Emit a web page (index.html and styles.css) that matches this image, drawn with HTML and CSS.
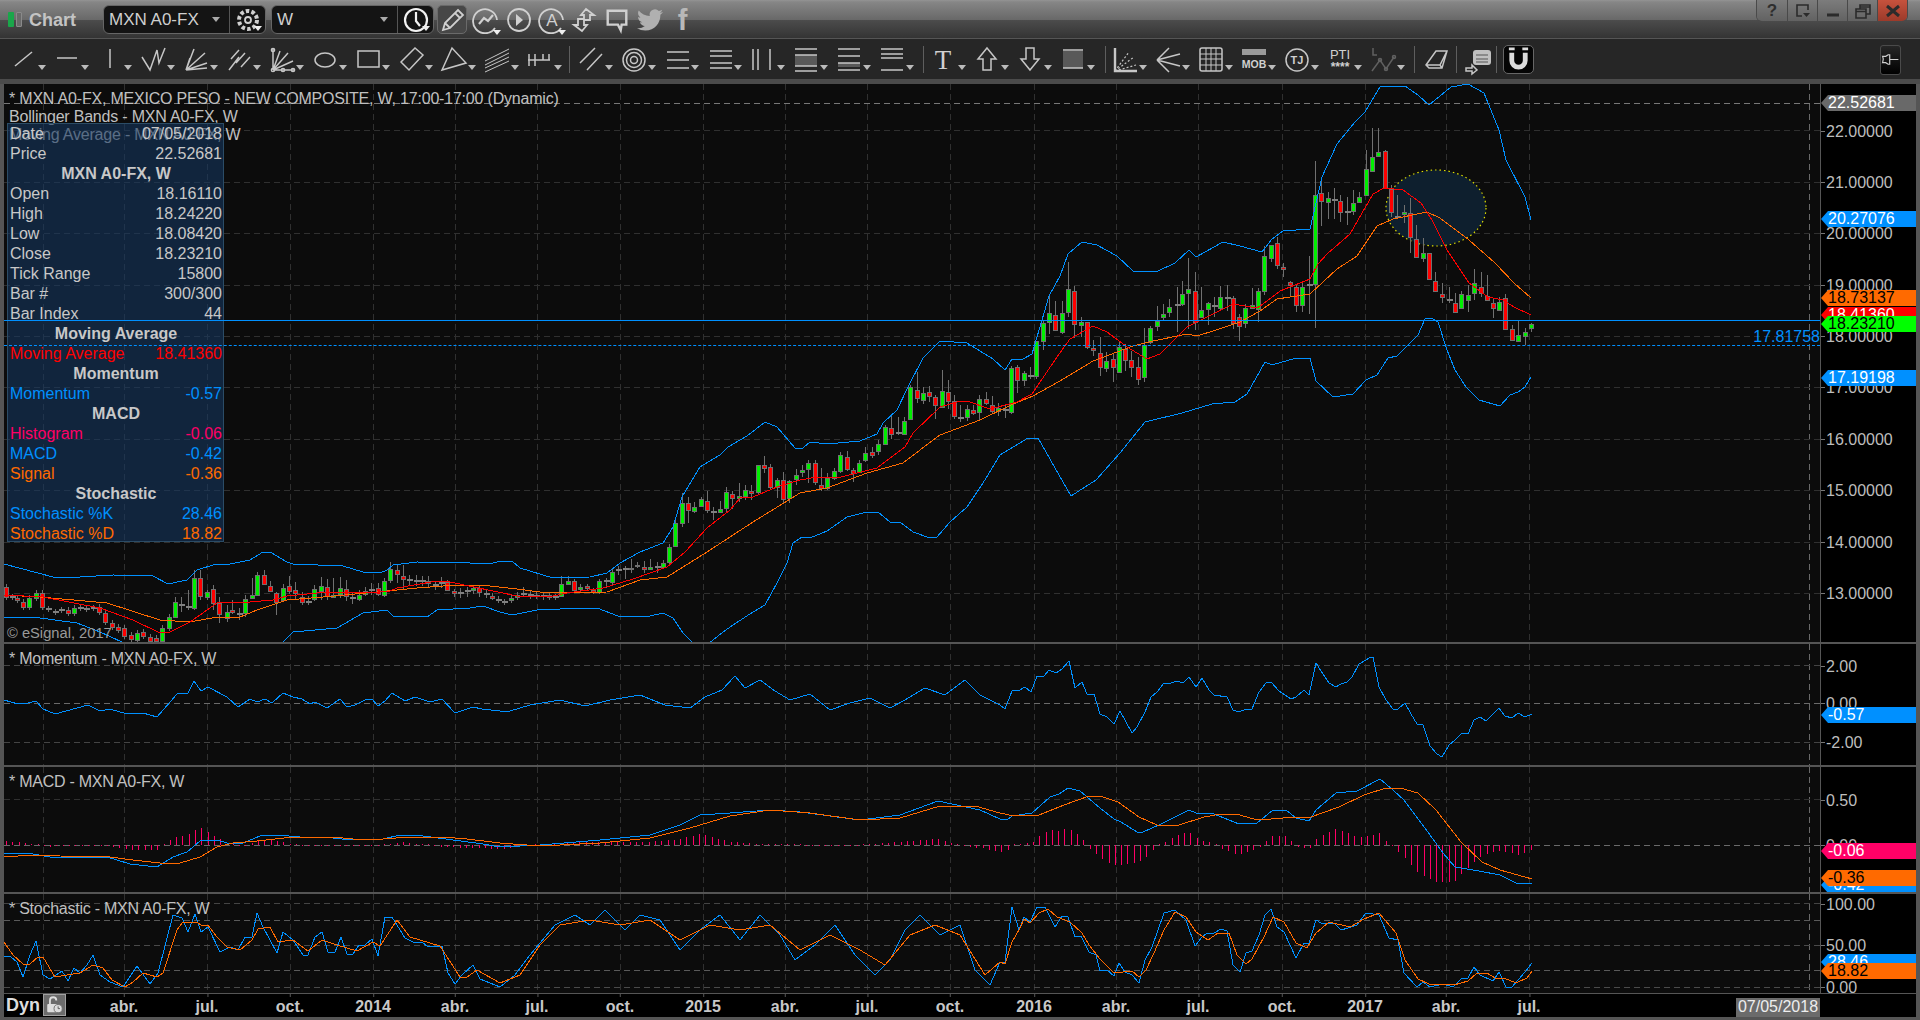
FILE: index.html
```html
<!DOCTYPE html>
<html lang="es">
<head>
<meta charset="utf-8">
<title>Chart - MXN A0-FX</title>
<link rel="stylesheet" href="styles.css">
</head>
<body>
<div class="window">
  <header class="titlebar">
    <div class="mark"><i class="mark-on"></i><i class="mark-off"></i></div>
    <div class="app-title">Chart</div>
    <div class="combo">
      <div class="combo-field"><span>MXN A0-FX</span><i class="caret caret-light"></i></div>
      <div class="combo-btn">
        <svg class="tic" viewBox="0 0 28 28"><circle class="gear" cx="14" cy="14" r="9"/><circle cx="14" cy="14" r="3"/></svg><i class="caret caret-mini"></i>
      </div>
    </div>
    <div class="combo">
      <div class="combo-field"><span>W</span><i class="caret caret-light"></i></div>
      <div class="combo-btn">
        <svg class="tic tic-bright" viewBox="0 0 28 28"><circle cx="14" cy="14" r="11"/><path d="M14 6V15L18 20"/></svg><i class="caret caret-mini"></i>
      </div>
    </div>
    <div class="pencil-btn">
      <svg class="tic" viewBox="0 0 28 28"><path d="M5 24L7 17 20 4 25 9 12 22ZM7 17L12 22M17 7L22 12"/></svg>
    </div>
    <div class="ticon"><svg class="tic" viewBox="0 0 28 28"><path d="M23 22A12 12 0 1 1 25 14"/><path class="thick" d="M7 18L12 12 16 15 21 9"/></svg><i class="caret caret-mini"></i></div>
    <div class="ticon"><svg class="tic" viewBox="0 0 28 28"><circle cx="14" cy="14" r="11"/><path class="fill" d="M11 8L18 14 11 20Z"/></svg></div>
    <div class="ticon"><svg class="tic" viewBox="0 0 28 28"><path d="M23 22A12 12 0 1 1 25 14"/><text class="ic-text ic-a" x="14" y="20">A</text></svg><i class="caret caret-mini"></i></div>
    <div class="ticon"><svg class="tic" viewBox="0 0 28 28"><path d="M16 3L24 9 20 9 20 14 14 14 14 9 11 9ZM12 25L4 19 8 19 8 13 14 13 14 19 17 19Z"/></svg></div>
    <div class="ticon"><svg class="tic tic-thick" viewBox="0 0 28 28"><path d="M4 4H24V19H19L18 25 15 19H4Z"/></svg></div>
    <div class="ticon"><svg class="tic tic-soft" viewBox="0 0 24 24"><path d="M23.95 4.57a10 10 0 01-2.82.77 4.96 4.96 0 002.16-2.72c-.95.55-2 .95-3.12 1.18a4.92 4.92 0 00-8.38 4.48C7.69 8.09 4.07 6.13 1.64 3.16a4.82 4.82 0 00-.66 2.47c0 1.71.87 3.21 2.19 4.1a4.9 4.9 0 01-2.23-.61v.06c0 2.38 1.7 4.37 3.95 4.82-.41.11-.85.17-1.3.17-.31 0-.62-.03-.92-.08.63 1.95 2.44 3.37 4.6 3.41A9.87 9.87 0 010 19.54a14 14 0 007.56 2.21c9.05 0 14-7.5 14-13.98 0-.21 0-.42-.02-.63a9.94 9.94 0 002.46-2.55z"/></svg></div>
    <div class="ticon fb">f</div>
    <div class="winbtns">
      <div class="winbtn help">?</div>
      <div class="winbtn"><svg class="wic" viewBox="0 0 20 16"><path d="M15 7V2H4V13H9"/><path class="fill" d="M10 10H17L13.5 14Z"/></svg></div>
      <div class="winbtn"><svg class="wic" viewBox="0 0 20 16"><path class="thick" d="M4 12H16"/></svg></div>
      <div class="winbtn"><svg class="wic" viewBox="0 0 20 16"><path d="M3 6H13V15H3ZM3 8.5H13M7 6V2H17V11H13M7 4H17"/></svg></div>
      <div class="winbtn close"><svg class="wic" viewBox="0 0 20 16"><path class="thick" d="M4 3L16 13M16 3L4 13"/></svg></div>
    </div>
  </header>

  <nav class="toolbar">
    <div class="tool"><svg class="ic" viewBox="0 0 28 28"><path d="M5 20L22 6"/></svg><i class="caret"></i></div>
    <div class="tool"><svg class="ic" viewBox="0 0 28 28"><path d="M4 12H24"/></svg><i class="caret"></i></div>
    <div class="tool"><svg class="ic" viewBox="0 0 28 28"><path d="M14 3V22"/></svg><i class="caret"></i></div>
    <div class="tool"><svg class="ic" viewBox="0 0 28 28"><path d="M3 11L11 24 18 4 20 17 26 2"/></svg><i class="caret"></i></div>
    <div class="tool"><svg class="ic" viewBox="0 0 28 28"><path d="M4 24L12 3M4 24L23 7M4 24L25 17M4 24L25 22M4 24L8 12"/></svg><i class="caret"></i></div>
    <div class="tool"><svg class="ic" viewBox="0 0 28 28"><path d="M6 13L14 4M11 17L20 7M16 21L25 11M4 24L14 11"/></svg><i class="caret"></i></div>
    <div class="tool"><svg class="ic" viewBox="0 0 28 28"><path d="M5 24V3M5 24H26M5 24L12 5M5 24L20 7M5 24L25 15"/><circle cx="5" cy="24" r="1.6"/><circle cx="5" cy="4" r="1.6"/><circle cx="15" cy="24" r="1.6"/><circle cx="25" cy="24" r="1.6"/></svg><i class="caret"></i></div>
    <div class="tool"><svg class="ic" viewBox="0 0 28 28"><ellipse cx="14" cy="14" rx="10" ry="7"/></svg><i class="caret"></i></div>
    <div class="tool"><svg class="ic" viewBox="0 0 28 28"><rect x="4" y="5" width="21" height="16"/></svg><i class="caret"></i></div>
    <div class="tool"><svg class="ic" viewBox="0 0 28 28"><path d="M4 16L18 2 26 9 12 24Z"/></svg><i class="caret"></i></div>
    <div class="tool"><svg class="ic" viewBox="0 0 28 28"><path d="M2 24L12 2 26 17Z"/></svg><i class="caret"></i></div>
    <div class="tool"><svg class="ic" viewBox="0 0 28 28"><path class="thin" d="M2 15L26 3M2 19L26 7M2 22L26 11M2 26L26 15"/></svg><i class="caret"></i></div>
    <div class="tool"><svg class="ic" viewBox="0 0 28 28"><path d="M2 14H24M3 8V20M9 8V20M17 8V14M23 8V14"/></svg><i class="caret"></i></div>
    <div class="divider"></div>
    <div class="tool"><svg class="ic" viewBox="0 0 28 28"><path d="M3 17L18 2M10 24L25 8"/></svg><i class="caret"></i></div>
    <div class="tool"><svg class="ic" viewBox="0 0 28 28"><circle cx="14" cy="14" r="11"/><circle cx="14" cy="14" r="7.5"/><circle cx="14" cy="14" r="3.5"/></svg><i class="caret"></i></div>
    <div class="tool"><svg class="ic" viewBox="0 0 28 28"><path d="M4 6H26M4 14H26M4 22H26"/></svg><i class="caret"></i></div>
    <div class="tool"><svg class="ic" viewBox="0 0 28 28"><path d="M4 5H26M4 10H26M4 17H26M4 22H26"/></svg><i class="caret"></i></div>
    <div class="tool"><svg class="ic" viewBox="0 0 28 28"><path d="M4 3V24M9 3V24M21 3V24"/></svg><i class="caret"></i></div>
    <div class="tool"><svg class="ic" viewBox="0 0 28 28"><rect class="shade" x="3" y="9" width="22" height="11"/><path d="M3 3H25M3 9H25M3 20H25M3 25H25"/></svg><i class="caret"></i></div>
    <div class="tool"><svg class="ic" viewBox="0 0 28 28"><rect class="shade" x="3" y="17" width="22" height="4"/><path d="M3 3H25M3 10H25M3 17H25M3 24H25"/></svg><i class="caret"></i></div>
    <div class="tool"><svg class="ic" viewBox="0 0 28 28"><path d="M3 3H25M3 8H25M3 12H25M3 24H25"/></svg><i class="caret"></i></div>
    <div class="divider divider-b"></div>
    <div class="tool"><svg class="ic" viewBox="0 0 28 28"><text class="ic-text ic-t" x="13" y="23">T</text></svg><i class="caret"></i></div>
    <div class="tool"><svg class="ic" viewBox="0 0 28 28"><path d="M14 2L23 13H18V24H10V13H5Z"/></svg><i class="caret"></i></div>
    <div class="tool"><svg class="ic" viewBox="0 0 28 28"><path d="M14 24L23 13H18V2H10V13H5Z"/></svg><i class="caret"></i></div>
    <div class="tool"><svg class="ic" viewBox="0 0 28 28"><rect class="shade" x="4" y="5" width="20" height="17"/><path d="M4 4H24M4 22H24"/></svg><i class="caret"></i></div>
    <div class="divider divider-c"></div>
    <div class="tool"><svg class="ic" viewBox="0 0 28 28"><path class="thick" d="M4 2V25H26"/><path class="dotted" d="M4 25L18 6M4 25L23 11M4 25L25 19"/></svg><i class="caret"></i></div>
    <div class="tool"><svg class="ic" viewBox="0 0 28 28"><path d="M3 14L15 2M3 14L26 8M3 14L26 20M3 14L15 26"/></svg><i class="caret"></i></div>
    <div class="tool"><svg class="ic" viewBox="0 0 28 28"><rect x="3" y="2" width="22" height="23" rx="2"/><path class="thin" d="M3 8H25M3 13H25M3 19H25M9 2V25M14 2V25M19 2V25"/></svg><i class="caret"></i></div>
    <div class="tool"><svg class="ic" viewBox="0 0 28 28"><rect class="shade shade-b" x="2" y="3" width="24" height="6"/><text class="ic-text ic-mob" x="14" y="22">MOB</text></svg><i class="caret"></i></div>
    <div class="tool"><svg class="ic" viewBox="0 0 28 28"><circle cx="14" cy="14" r="11"/><text class="ic-text ic-tj" x="14" y="18">TJ</text></svg><i class="caret"></i></div>
    <div class="tool"><svg class="ic" viewBox="0 0 28 28"><text class="ic-text ic-pti" x="14" y="13">PTI</text><text class="ic-text ic-star" x="14" y="25">****</text></svg><i class="caret"></i></div>
    <div class="tool"><svg class="ic ic-dim" viewBox="0 0 28 28"><path d="M4 2V9H8M3 25L11 14 17 23 25 11"/><circle cx="11" cy="14" r="1.5"/><circle cx="17" cy="23" r="1.5"/><circle cx="25" cy="11" r="1.5"/></svg><i class="caret"></i></div>
    <div class="divider divider-d"></div>
    <div class="tool tool-plain"><svg class="ic" viewBox="0 0 28 28"><path d="M4 19L14 5H25L20 22H7ZM4 19H18L25 5M18 19L20 22"/></svg></div>
    <div class="divider divider-e"></div>
    <div class="tool tool-plain tool-wide"><svg class="ic" viewBox="0 0 28 28"><rect class="solid" x="9" y="4" width="18" height="15" rx="3"/><path class="dark" d="M12 9H24M12 13H24M12 16H24"/><path d="M2 22H8V19L13 24 8 28V25H2Z"/></svg></div>
    <div class="divider divider-f"></div>
    <div class="snap-btn"><svg class="snap" viewBox="0 0 28 26"><path class="snap-u" d="M7 6V14A7 7 0 0 0 21 14V6"/><path class="snap-top" d="M4 2H10M18 2H24"/></svg></div>
    <div class="pin-btn"><svg class="ic pin" viewBox="0 0 24 24"><path d="M2 8H6L9 6H11V18H9L6 16H2Q4 12 2 8ZM11 12H22"/></svg></div>
  </nav>

  <div class="strip"></div>

  <main class="chart">
    <section class="pane pane-price">
      <div class="plot">
        <svg id="svg-price" class="canvas" viewBox="4 84 1816 558" width="1816" height="558"></svg>
        <div class="legend">
          <div>* MXN A0-FX, MEXICO PESO - NEW COMPOSITE, W, 17:00-17:00 (Dynamic)</div>
          <div>Bollinger Bands - MXN A0-FX, W</div>
          <div class="legend-dim">Moving Average - MXN A0-FX, W</div>
        </div>
        <div class="copyright">© eSignal, 2017</div>
        <div class="data-panel">
          <div class="row"><span>Date</span><span>07/05/2018</span></div>
          <div class="row"><span>Price</span><span>22.52681</span></div>
          <div class="row head">MXN A0-FX, W</div>
          <div class="row"><span>Open</span><span>18.16110</span></div>
          <div class="row"><span>High</span><span>18.24220</span></div>
          <div class="row"><span>Low</span><span>18.08420</span></div>
          <div class="row"><span>Close</span><span>18.23210</span></div>
          <div class="row"><span>Tick Range</span><span>15800</span></div>
          <div class="row"><span>Bar #</span><span>300/300</span></div>
          <div class="row"><span>Bar Index</span><span>44</span></div>
          <div class="row head">Moving Average</div>
          <div class="row c-red"><span>Moving Average</span><span>18.41360</span></div>
          <div class="row head">Momentum</div>
          <div class="row c-blue"><span>Momentum</span><span>-0.57</span></div>
          <div class="row head">MACD</div>
          <div class="row c-pink"><span>Histogram</span><span>-0.06</span></div>
          <div class="row c-blue"><span>MACD</span><span>-0.42</span></div>
          <div class="row c-orange"><span>Signal</span><span>-0.36</span></div>
          <div class="row head">Stochastic</div>
          <div class="row c-blue"><span>Stochastic %K</span><span>28.46</span></div>
          <div class="row c-orange"><span>Stochastic %D</span><span>18.82</span></div>
        </div>
        <div class="hline hline-solid"></div>
        <div class="hline hline-dash"></div>
        <div class="level-label">17.81758</div>
      </div>
      <div class="axis" id="axis-price"></div>
    </section>
    <section class="pane pane-mom">
      <div class="plot">
        <svg id="svg-mom" class="canvas" viewBox="4 644 1816 121" width="1816" height="121"></svg>
        <div class="pane-title">* Momentum - MXN A0-FX, W</div>
      </div>
      <div class="axis" id="axis-mom"></div>
    </section>
    <section class="pane pane-macd">
      <div class="plot">
        <svg id="svg-macd" class="canvas" viewBox="4 767 1816 125" width="1816" height="125"></svg>
        <div class="pane-title">* MACD - MXN A0-FX, W</div>
      </div>
      <div class="axis" id="axis-macd"></div>
    </section>
    <section class="pane pane-sto">
      <div class="plot">
        <svg id="svg-sto" class="canvas" viewBox="4 894 1816 99" width="1816" height="99"></svg>
        <div class="pane-title">* Stochastic - MXN A0-FX, W</div>
      </div>
      <div class="axis" id="axis-sto"></div>
    </section>
    <footer class="timeaxis">
      <div class="dyn">Dyn</div>
      <div class="lock"><svg viewBox="0 0 22 22"><path class="lock-arc" d="M6 10V6A3.5 3.5 0 0 1 13 6"/><rect class="lock-body" x="3" y="10" width="11" height="9" rx="1"/><circle class="lock-clock" cx="15" cy="15" r="4.5"/><path class="lock-hand" d="M15 12.5V15H17"/></svg></div>
      <div class="ticks" id="ticks"></div>
      <div class="date-flag">07/05/2018</div>
    </footer>
  </main>
</div>
<script src="chart.js"></script>
</body>
</html>
```

FILE: styles.css
```css
* { box-sizing: border-box; }
html, body { margin: 0; padding: 0; }
body {
  width: 1920px; height: 1020px; overflow: hidden; background: #000;
  font-family: "Liberation Sans", Arial, sans-serif; font-size: 16px; color: #c8c8c8;
}
.window { display: flex; flex-direction: column; height: 1020px; }

/* title bar */
.titlebar {
  height: 39px; flex: none; display: flex; align-items: center; padding-left: 8px;
  background: linear-gradient(#949494 0, #868686 2px, #686868 20px, #4c4c4c 20px, #343434 38px, #555 38px);
}
.mark { display: flex; gap: 2px; width: 14px; height: 15px; }
.mark i { width: 6px; display: block; border-radius: 1px; }
.mark-on { background: #1aa64a; }
.mark-off { background: #6a6a6a; border: 1px solid #8a8a8a; }
.app-title { width: 74px; margin-left: 7px; padding-top: 2px; font-size: 18px; font-weight: bold; color: #c4c4c4; }
.combo {
  width: 163px; height: 29px; margin-right: 5px; display: flex; background: #141414;
  border: 1px solid #666; border-radius: 6px;
}
.combo-field { flex: 1; display: flex; align-items: center; justify-content: space-between; padding: 0 9px 0 5px; font-size: 17px; color: #cfcfcf; }
.combo-btn { width: 36px; border-left: 1px solid #555; position: relative; display: flex; align-items: center; justify-content: center; }
.caret { display: block; width: 0; height: 0; border-left: 4px solid transparent; border-right: 4px solid transparent; border-top: 5px solid #bbb; position: absolute; left: 28px; top: 19px; }
.caret-light { position: static; border-top-color: #aaa; }
.caret-mini { left: auto; right: 3px; top: auto; bottom: 2px; border-top-color: #eee; }
.tic { width: 28px; height: 28px; fill: none; stroke: #d0d0d0; stroke-width: 1.8; }
.tic .thick { stroke-width: 2.2; }
.tic .fill { fill: #d0d0d0; stroke: none; }
.tic-bright { stroke: #f2f2f2; stroke-width: 2.2; }
.tic-thick { stroke-width: 2.6; width: 26px; }
.tic-soft { fill: #b0b0b0; stroke: none; width: 26px; height: 26px; }
.gear { stroke-width: 4; stroke-dasharray: 3.5 2.2; }
.pencil-btn {
  width: 30px; height: 29px; margin-left: -2px; margin-right: 3px; display: flex; align-items: center; justify-content: center;
  border: 1px solid #6a6a6a; border-radius: 5px; background: #474747;
}
.ticon { width: 32.7px; height: 30px; position: relative; display: flex; align-items: center; justify-content: center; }
.ticon .caret-mini { right: 2px; bottom: 0; }
.fb { font-size: 29px; font-weight: bold; color: #b8b8b8; line-height: 30px; }
.ic-text { fill: #d0d0d0; stroke: none; font-family: "Liberation Sans", Arial, sans-serif; text-anchor: middle; }
.ic-a { font-size: 17px; }
.winbtns {
  margin-left: auto; margin-right: 12px; align-self: flex-start; height: 22px; display: flex;
  border: 1px solid #4a4a4a; border-top: 0; border-radius: 0 0 6px 6px; overflow: hidden;
}
.winbtn {
  width: 30px; display: flex; align-items: center; justify-content: center;
  background: linear-gradient(#7c7c7c, #626262); border-left: 1px solid #494949;
}
.winbtn:first-child { border-left: 0; }
.help { font-size: 17px; font-weight: bold; color: #2e2e2e; }
.close { background: linear-gradient(#c6523d, #9c3a2a); }
.wic { width: 20px; height: 16px; fill: none; stroke: #2b2b2b; stroke-width: 1.6; }
.wic .thick { stroke-width: 3; }
.wic .fill { fill: #2b2b2b; stroke: none; }

/* drawing toolbar */
.toolbar {
  height: 40px; flex: none; display: flex; align-items: center; padding: 1px 19px 0 10px; background: #262626;
}
.tool { width: 43px; height: 28px; position: relative; flex: none; }
.tool-plain { width: 34px; }
.tool-wide { width: 32px; }
.ic { display: block; width: 28px; height: 28px; fill: none; stroke: #c6c6c6; stroke-width: 1.5; overflow: visible; }
.ic-dim { stroke: #606060; }
.ic .shade { fill: #595959; stroke: none; }
.ic .shade-b { fill: #9a9a9a; }
.ic .thick { stroke-width: 2.4; }
.ic .thin { stroke-width: 1; }
.ic .dotted { stroke-width: 1.2; stroke-dasharray: 2 2; }
.ic .solid { fill: #c0c0c0; stroke: none; }
.ic .dark { stroke: #555; stroke-width: 1.2; }
.ic-t { font-family: "Liberation Serif", serif; font-size: 27px; font-weight: normal; }
.ic-mob { font-size: 10.5px; font-weight: bold; }
.ic-tj { font-size: 11px; font-weight: bold; }
.ic-pti { font-size: 13px; }
.ic-star { font-size: 12px; font-weight: bold; }
.divider { width: 1px; height: 27px; background: #5e5e5e; margin-right: 7px; flex: none; }
.divider-b { margin-left: 2px; margin-right: 6px; }
.divider-c { margin-left: 3px; margin-right: 5px; }
.divider-d { margin-left: 2px; margin-right: 7px; }
.divider-e { margin-right: 7px; }
.divider-f { margin-right: 6px; }
.snap-btn {
  width: 31px; height: 29px; background: #050505; border: 1px solid #666; border-radius: 5px;
  display: flex; align-items: center; justify-content: center;
}
.snap { width: 27px; height: 25px; fill: none; }
.snap-u { stroke: #dcdcdc; stroke-width: 5; }
.snap-top { stroke: #dcdcdc; stroke-width: 3; }
.pin-btn {
  margin-left: auto; width: 21px; height: 30px; background: linear-gradient(#262626, #000);
  border: 1px solid #4a4a4a; border-radius: 3px; display: flex; align-items: center; justify-content: center;
}
.pin { width: 19px; height: 19px; stroke: #cfcfcf; }
.strip { height: 5px; flex: none; background: #4b4b4b; }

/* chart */
.chart {
  flex: 1; display: flex; flex-direction: column; min-height: 0;
  border: solid #555; border-width: 0 4px 3px 4px; background: #000;
}
.pane { display: grid; grid-template-columns: 1816px 96px; flex: none; overflow: hidden; }
.pane + .pane { border-top: 2px solid #555; }
.pane-price { height: 558px; }
.pane-mom { height: 123px; }
.pane-macd { height: 127px; }
.pane-sto { height: 102px; border-bottom: 1px solid #555; }
.plot { position: relative; overflow: hidden; background: #0c0c0c; }
.canvas { display: block; }
.axis { position: relative; overflow: hidden; border-left: 1px solid #555; background: #000; }
.tick {
  position: absolute; left: 5px; height: 16px; line-height: 16px; color: #bdbdbd; white-space: nowrap;
  transform: translateY(-50%);
}
.tick::before { content: ""; position: absolute; left: -5px; top: 7px; width: 4px; height: 1px; background: #777; }
.flag {
  position: absolute; left: 0; width: 95px; height: 16px; line-height: 16px; padding-left: 7px;
  transform: translateY(-50%); white-space: nowrap;
  clip-path: polygon(7px 0, 100% 0, 100% 100%, 7px 100%, 0 50%);
}
.f-gray { background: #696969; color: #fff; }
.f-blue { background: #0090ff; color: #fff; }
.f-orange { background: #ff6a00; color: #000; }
.f-red { background: #ff0000; color: #fff; }
.f-green { background: #00ff00; color: #000; }
.f-pink { background: #ff0066; color: #fff; }

.legend { position: absolute; left: 5px; top: 6px; line-height: 18px; color: #c0c0c0; white-space: nowrap; letter-spacing: -.2px; }
.copyright { position: absolute; left: 3px; top: 540px; color: #9a9a9a; line-height: 18px; font-size: 14.7px; }
.data-panel {
  position: absolute; left: 3px; top: 39px; width: 217px; height: 419px; overflow: hidden;
  background: rgba(22, 55, 95, .6); border: 1px solid #2b4c66;
}
.row { display: flex; justify-content: space-between; height: 20px; line-height: 19px; padding: 0 1px 0 2px; white-space: nowrap; color: #c8c8c8; }
.head { justify-content: center; font-weight: bold; }
.c-red { color: #ff0000; }
.c-blue { color: #0090ff; }
.c-pink { color: #ff0066; }
.c-orange { color: #ff6a00; }
.hline { position: absolute; left: 0; right: 0; height: 0; }
.hline-solid { top: 236px; border-top: 1px solid #0090ff; }
.hline-dash { top: 261px; border-top: 1px dashed #0090ff; }
.level-label { position: absolute; right: 0; top: 244px; line-height: 18px; color: #0090ff; }
.pane-title { position: absolute; left: 5px; top: 6px; line-height: 18px; color: #c0c0c0; white-space: nowrap; letter-spacing: -.25px; }

.timeaxis { height: 23px; flex: none; position: relative; display: flex; background: #000; }
.dyn { font-size: 18px; font-weight: bold; color: #ddd; line-height: 22px; margin-left: 2px; width: 37px; }
.lock { width: 23px; height: 22px; background: #6b6b6b; border: 1px solid #a0a0a0; }
.lock svg { display: block; width: 21px; height: 20px; }
.lock-arc { fill: none; stroke: #ddd; stroke-width: 2; }
.lock-body { fill: #ddd; }
.lock-clock { fill: #ddd; stroke: #6b6b6b; }
.lock-hand { fill: none; stroke: #555; }
.ticks { position: absolute; inset: 0; }
.tlabel {
  position: absolute; top: 3px; font-weight: bold; color: #c8c8c8; line-height: 20px; transform: translateX(-50%);
}
.tlabel::before { content: ""; position: absolute; left: 50%; top: -3px; width: 1px; height: 3px; background: #555; }
.date-flag {
  position: absolute; left: 1732px; top: 4px; width: 84px; height: 19px; line-height: 18px; text-align: center;
  background: #6b6b6b; color: #eee;
}
```

FILE: chart.js
```js
(function () {
  var BLUE = '#0090ff', ORANGE = '#ff6a00', RED = '#ff0000', PINK = '#ff0066';
  var VERT = [43,124,207,290,373,455,537,620,703,785,867,950,1034,1116,1198,1282,1365,1446,1529];
  var X0 = 4, X1 = 1820;

  var upper = '4,564 53,577 80,577 113,575 153,576 168,584 187,580 197,570 213,565 230,564 250,560 263,552 270,552 287,562 293,564 343,566 363,572 380,573 387,570 393,565 417,562 470,563 490,564 500,561 512,561 520,568 553,578 590,577 607,573 620,563 640,552 663,543 673,527 682,497 700,467 720,455 728,447 747,436 765,422 777,427 795,448 803,448 810,442 827,444 860,441 877,434 883,423 897,410 908,387 923,358 940,341 967,343 993,359 1005,370 1012,359 1023,359 1032,354 1049,296 1060,276 1068,254 1082,242 1097,245 1117,256 1133,271 1158,271 1175,263 1189,250 1196,257 1223,242 1240,246 1262,252 1272,239 1283,231 1310,229 1322,177 1337,144 1355,122 1365,112 1380,87 1405,86 1418,95 1429,105 1451,87 1468,84 1484,93 1499,130 1506,160 1525,197 1531,220';
  var lower = '4,618 33,617 77,623 100,632 122,642 150,660 250,660 283,642 293,632 337,628 363,613 387,610 393,616 427,617 437,610 470,608 483,606 500,612 512,615 537,610 583,608 597,608 618,616 650,616 663,613 673,618 683,633 690,640 700,650 713,640 723,632 733,625 753,612 765,605 777,583 787,563 793,543 802,537 810,538 827,531 847,517 867,512 878,512 890,522 900,522 913,532 927,537 937,537 950,522 967,507 983,483 1000,455 1028,438 1038,438 1071,496 1096,480 1120,453 1145,422 1182,413 1212,404 1235,402 1247,394 1265,362 1272,365 1293,359 1310,358 1316,381 1333,397 1353,394 1366,380 1377,375 1388,358 1397,356 1418,335 1425,319 1431,318 1438,322 1447,350 1455,370 1466,387 1479,400 1500,406 1510,395 1518,392 1525,387 1531,377';
  var ma1 = '4,595 43,597 100,608 133,620 160,633 170,632 190,622 217,603 230,602 250,602 273,600 287,596 327,592 367,593 390,591 397,588 437,581 450,582 493,591 517,596 553,596 567,593 603,588 633,579 667,567 685,552 707,528 730,510 740,498 753,497 777,487 800,480 817,477 837,478 877,468 905,447 913,433 940,407 957,402 967,401 990,409 1017,402 1032,394 1057,357 1070,339 1093,326 1107,332 1127,347 1147,359 1160,354 1187,327 1193,324 1233,304 1257,308 1263,304 1280,291 1310,279 1318,264 1327,254 1350,234 1373,194 1384,188 1403,190 1421,203 1432,220 1447,250 1469,283 1488,297 1503,300 1514,307 1531,315';
  var ma2 = '4,595 40,597 107,603 160,620 190,622 217,617 240,617 257,610 287,600 323,597 377,592 417,588 443,586 473,585 490,586 517,589 540,592 563,593 607,592 640,580 667,577 707,552 753,522 800,493 827,488 867,473 903,463 920,450 940,435 980,420 1013,404 1033,396 1060,381 1093,361 1133,346 1153,341 1187,334 1197,336 1213,331 1240,322 1260,311 1277,299 1310,294 1337,269 1357,256 1377,226 1393,219 1427,212 1440,218 1469,240 1495,263 1514,283 1531,298';

  var mom = '4,700 18,704 28,703 36,701 43,709 55,714 77,708 88,705 100,711 110,709 127,714 143,713 157,717 177,694 188,693 194,681 201,691 208,687 227,697 238,707 250,699 257,702 265,699 272,703 283,693 293,697 302,699 310,704 315,702 327,708 340,699 347,707 355,705 367,699 372,699 378,706 385,701 392,693 405,701 415,697 430,702 442,699 455,713 473,707 482,709 500,711 510,711 530,705 560,700 585,706 610,700 640,695 665,705 690,708 705,697 722,690 735,676 745,688 760,680 775,691 790,700 810,694 830,710 850,703 870,698 890,708 905,700 925,688 945,695 965,680 980,695 1000,705 1005,709 1012,691 1020,690 1025,687 1031,692 1037,676 1044,676 1049,670 1056,673 1062,669 1069,661 1075,688 1082,682 1087,694 1094,694 1100,714 1107,717 1114,724 1120,711 1132,733 1137,727 1145,712 1151,697 1157,692 1164,683 1171,683 1177,681 1183,683 1189,677 1196,687 1202,678 1209,690 1214,695 1227,697 1233,710 1239,712 1246,709 1252,709 1259,692 1266,683 1271,682 1279,691 1291,699 1296,697 1304,690 1309,695 1316,663 1321,671 1329,683 1336,687 1341,684 1347,682 1352,677 1359,664 1371,657 1373,657 1379,687 1386,700 1393,709 1398,709 1405,703 1411,714 1417,724 1423,725 1430,746 1437,754 1442,757 1449,745 1455,740 1462,733 1468,734 1474,720 1480,717 1486,721 1499,708 1505,716 1512,718 1518,713 1525,717 1532,714';

  var macdB = '4,853 33,854 50,857 80,857 107,857 130,864 157,867 173,857 187,852 200,841 217,840 227,843 243,843 260,836 277,835 300,837 333,838 350,840 383,839 400,835 423,836 453,840 483,844 500,847 540,845 600,840 650,835 680,825 700,815 730,813 770,810 800,812 860,820 900,815 938,801 980,810 1000,819 1007,820 1012,816 1032,813 1050,797 1059,794 1068,788 1080,791 1100,808 1114,819 1121,822 1137,832 1143,832 1161,824 1189,810 1196,813 1214,814 1239,824 1257,823 1273,810 1286,810 1296,818 1309,821 1316,810 1336,793 1357,791 1380,779 1393,790 1404,800 1425,828 1443,853 1455,867 1479,871 1500,875 1518,884 1532,883';
  var macdO = '4,857 33,855 60,856 110,857 133,860 160,863 180,863 200,857 217,847 233,843 257,841 293,837 333,837 353,839 383,839 410,837 443,837 467,839 500,843 540,846 600,843 650,838 690,828 730,816 770,810 810,813 860,820 900,818 940,806 975,806 1000,813 1014,816 1039,815 1064,805 1089,796 1100,796 1118,802 1139,817 1157,825 1179,825 1204,817 1221,814 1236,814 1254,819 1271,819 1296,817 1311,817 1339,807 1364,795 1386,788 1400,788 1418,793 1436,810 1461,842 1482,862 1500,870 1532,879';

  var stoB = '4,956 10,956 17,962 23,977 30,955 36,941 43,975 50,979 62,971 68,981 74,968 80,973 87,965 93,955 100,975 110,982 123,987 137,966 150,984 158,973 173,915 182,918 188,932 195,914 201,932 208,927 220,952 230,947 238,950 245,937 252,937 257,913 263,927 277,953 283,932 293,940 303,955 308,955 315,937 322,932 328,952 335,952 341,937 347,954 353,954 359,945 365,945 372,939 378,956 385,917 392,917 405,938 413,942 422,942 428,947 442,946 448,973 455,984 462,975 473,965 480,979 500,987 515,975 530,955 555,925 575,915 590,925 605,910 625,930 640,915 660,920 680,950 700,930 720,915 740,940 760,915 780,935 795,960 815,945 835,925 855,955 875,975 890,960 905,930 920,915 940,935 960,925 975,970 990,985 1000,962 1005,962 1012,907 1019,930 1024,917 1030,922 1037,907 1045,907 1055,927 1062,916 1068,917 1075,937 1081,936 1089,952 1096,955 1100,971 1107,970 1114,976 1119,963 1125,972 1132,975 1139,983 1145,960 1152,947 1164,913 1175,910 1186,920 1195,946 1202,937 1207,933 1214,933 1221,929 1227,931 1233,965 1240,972 1246,953 1252,951 1259,935 1265,915 1271,909 1277,927 1284,932 1296,958 1304,943 1309,943 1316,920 1321,923 1334,923 1341,930 1348,928 1357,925 1366,913 1379,915 1389,938 1398,940 1404,973 1417,987 1423,982 1430,987 1443,984 1453,987 1462,978 1468,978 1474,967 1480,975 1493,981 1499,972 1506,987 1512,987 1525,972 1532,963';
  var stoO = '4,942 13,955 23,964 30,964 38,957 43,957 55,977 67,975 80,973 93,965 103,968 112,980 125,987 133,982 143,973 157,977 163,973 177,930 183,922 197,922 202,926 208,925 217,937 227,947 240,950 252,940 258,929 270,927 278,942 293,940 308,951 322,940 337,945 357,951 373,942 380,946 397,920 410,937 440,946 460,977 467,977 477,970 500,983 520,975 540,945 560,925 590,920 620,925 650,920 680,940 710,925 740,930 770,925 800,950 830,935 860,950 885,965 910,935 935,925 960,935 985,975 1000,962 1005,964 1012,942 1020,928 1024,919 1030,923 1039,913 1048,909 1057,917 1070,922 1082,933 1089,945 1100,959 1114,973 1132,971 1139,977 1146,970 1154,953 1164,930 1175,912 1186,917 1196,932 1208,940 1218,933 1229,933 1237,955 1246,964 1252,959 1264,937 1273,917 1284,922 1296,943 1307,948 1316,933 1329,922 1350,927 1364,919 1379,913 1396,933 1405,960 1418,979 1429,984 1454,985 1468,981 1477,973 1487,973 1495,978 1504,978 1516,983 1527,978 1532,971';

  // x top bottom colour [high low]; defaults give a short wick
  var C = '6 587 597 r|12 597 597 d|17 598 600 r|23 602 607 r|29 598 607 g|36 593 598 g|42 593 607 r|48 609 609 d|55 612 612 d|61 610 610 d|68 610 613 r|74 608 613 g|80 608 608 d|86 609 609 d|93 608 608 d|99 607 612 r|105 613 622 r|112 623 627 r|118 627 630 r|124 628 636 r|131 635 639 r|137 633 640 g|143 632 636 r|150 637 641 r|156 638 641 r|162 628 641 g|169 617 628 g|175 602 617 g 597 618|181 605 605 d 597 612|188 607 607 d 590 610|194 578 608 g 570 610|200 578 596 r 570 600|207 592 597 g 590 600|213 589 603 r 585 610|219 603 614 r 597 623|227 612 618 g 605 622|232 610 612 r 600 614|239 614 614 d 608 620|245 599 613 g 595 617|252 595 598 g 578 599|257 575 595 g 572 596|264 575 584 r 570 585|270 586 591 r 581 592|276 593 602 r 592 615|283 588 600 g 584 602|289 586 591 r 576 594|295 590 593 r 582 600|302 597 602 r 592 605|308 602 602 d 596 605|314 589 599 g 585 601|321 586 591 g 577 600|327 587 596 r 579 600|333 595 597 g 578 598|340 588 594 g 577 598|346 589 596 r 580 601|352 598 598 d 592 604|359 595 599 g 590 601|365 591 594 g 587 596|371 590 590 d 583 595|378 588 594 r 583 596|384 581 595 g 578 597|390 569 580 g 562 583|397 570 574 r 565 583|403 576 579 r 565 590|409 580 580 d 575 585|416 581 581 d 575 586|422 581 581 d 576 586|428 581 583 r 576 588|435 585 585 d 581 590|441 583 583 d 577 588|447 582 590 r 580 591|454 591 593 r 589 597|460 593 593 d 588 598|467 591 591 d 587 597|473 588 590 g 586 594|479 588 592 r 586 597|486 594 594 d 590 598|492 596 598 r 593 600|498 600 600 d 596 603|504 602 602 d 599 605|511 598 600 g 595 603|517 595 597 g 592 600|523 594 594 d 587 597|530 595 595 d 591 599|536 596 596 d 592 599|543 596 596 d 592 600|549 595 597 r 592 600|555 597 597 d 594 600|561 584 596 g 576 597|568 581 584 g 576 585|574 581 590 r 579 592|580 587 589 g 584 592|587 586 588 r 584 591|593 590 592 r 588 594|599 581 592 g 579 594|606 581 581 d 578 588|612 572 582 g 569 585|618 570 570 d 566 575|625 569 569 d 566 579|631 568 569 g 559 573|637 565 566 g 562 568|644 567 569 r 561 573|650 567 569 g 559 570|657 567 567 d 562 573|663 563 567 g 560 568|669 547 562 g 544 564|675 523 546 g 520 547|682 503 523 g 493 527|688 503 510 r 497 523|694 507 511 g 502 513|701 499 506 g 497 507|707 501 510 r 491 513|713 512 512 d 507 520|720 509 512 g 501 513|726 492 508 g 487 513|732 494 498 r 491 509|739 496 498 g 483 502|745 490 496 g 485 500|751 491 493 r 485 500|758 465 492 g 465 494|764 465 468 r 456 473|770 467 487 r 464 490|777 480 487 g 478 498|783 480 499 r 472 503|789 481 498 g 480 503|796 475 479 g 469 485|802 470 472 g 465 477|808 463 469 g 460 483|815 463 482 r 460 485|821 485 488 r 468 491|827 478 488 g 473 490|834 471 478 g 468 480|840 455 471 g 452 473|847 457 469 r 451 471|853 470 473 r 468 482|859 463 472 g 460 473|865 453 460 g 447 462|872 452 455 r 447 458|878 444 451 g 440 455|885 427 444 g 425 445|891 428 434 r 415 439|898 433 433 d 417 435|904 421 434 g 417 435|910 387 419 g 385 420|917 390 398 r 372 403|923 393 400 g 387 404|929 392 396 r 386 402|935 397 405 r 395 419|942 391 407 g 370 408|948 392 401 r 380 409|954 401 416 r 395 419|960 418 418 d 405 422|967 409 417 g 405 421|973 410 413 r 405 415|979 399 412 g 395 420|986 399 403 r 392 405|992 405 411 r 396 414|998 408 411 g 403 416|1005 410 410 d 405 418|1011 368 412 g 366 414|1017 367 380 r 365 393|1024 373 380 g 371 386|1030 376 376 d 367 379|1036 341 376 g 341 379|1043 323 341 g 321 350|1049 313 322 g 296 334|1055 315 330 r 301 331|1062 313 332 g 301 334|1068 289 312 g 262 317|1074 291 324 r 286 338|1081 322 325 g 317 337|1087 322 347 r 322 349|1093 348 350 r 340 356|1100 353 367 r 337 376|1106 361 368 g 352 372|1113 359 367 r 354 382|1119 347 372 g 341 373|1125 349 360 r 344 371|1131 360 367 r 351 377|1138 367 379 r 357 385|1144 345 377 g 328 382|1150 328 342 g 326 344|1157 321 326 g 306 331|1163 314 317 g 304 321|1169 307 312 g 299 317|1177 305 305 d 287 332|1182 294 304 g 281 306|1188 289 293 g 258 329|1195 291 322 r 272 330|1201 310 317 g 287 317|1208 303 309 g 302 325|1214 306 306 d 297 317|1220 297 308 g 286 311|1227 298 298 d 285 311|1233 298 323 r 296 329|1239 317 326 r 314 341|1245 308 323 g 304 328|1252 305 308 g 288 308|1258 291 309 g 288 322|1264 256 291 g 246 295|1271 245 258 g 245 262|1277 243 265 r 237 269|1283 267 269 r 263 277|1290 282 285 r 281 296|1296 287 305 r 284 312|1302 287 305 g 281 312|1309 285 285 d 256 314|1315 195 284 g 161 328|1321 193 201 r 179 226|1328 198 202 g 192 219|1334 200 200 d 188 219|1340 201 212 r 195 222|1347 212 212 d 197 225|1353 203 211 g 190 215|1359 197 202 g 192 203|1366 169 195 g 150 195|1372 157 171 g 128 171|1378 152 156 g 128 157|1385 151 188 r 150 189|1391 189 212 r 185 217|1397 217 217 d 195 218|1404 212 214 g 205 223|1410 213 237 r 198 253|1416 239 257 r 225 258|1423 253 258 g 238 262|1429 253 279 r 253 280|1435 281 291 r 272 292|1442 294 297 r 283 303|1449 300 300 d 287 303|1455 303 312 r 293 312|1461 294 308 g 291 308|1468 295 300 g 285 312|1474 283 293 g 269 300|1481 287 293 r 272 297|1487 296 300 r 275 300|1493 303 308 r 298 318|1499 302 310 g 297 310|1505 298 329 r 294 329|1512 329 340 r 325 340|1518 335 341 g 320 342|1525 332 336 g 328 345|1531 324 328 g 323 332';

  function pts(s) {
    return s.split(' ').map(function (p) { var a = p.split(','); return [+a[0], +a[1]]; });
  }
  function at(list, x) {
    for (var i = 1; i < list.length; i++) {
      if (x <= list[i][0]) {
        var a = list[i - 1], b = list[i];
        return a[1] + (b[1] - a[1]) * (x - a[0]) / (b[0] - a[0]);
      }
    }
    return list[list.length - 1][1];
  }
  function line(points, color) {
    return '<polyline points="' + points + '" fill="none" stroke="' + color + '" stroke-width="1" shape-rendering="crispEdges"/>';
  }
  function grid(ys, top, bottom) {
    var s = '';
    VERT.concat([1809]).forEach(function (x) {
      var c = x === 1809 ? '#6a6a6a' : '#303030';
      s += '<path d="M' + (x + .5) + ' ' + top + 'V' + bottom + '" stroke="' + c + '" stroke-dasharray="6 4" shape-rendering="crispEdges"/>';
    });
    ys.forEach(function (g) {
      s += '<path d="M' + X0 + ' ' + (g[0] + .5) + 'H' + X1 + '" stroke="' + (g[1] || '#303030') + '" stroke-dasharray="6 4" shape-rendering="crispEdges"/>';
    });
    return s;
  }
  function candles() {
    var s = '';
    C.split('|').forEach(function (row) {
      var r = row.split(' '), x = +r[0], t = +r[1], b = +r[2], c = r[3];
      var h = r[4] ? +r[4] : t - 3, l = r[5] ? +r[5] : b + 3;
      s += '<path d="M' + (x + .5) + ' ' + h + 'V' + l + '" stroke="#707070" shape-rendering="crispEdges"/>';
      if (c === 'd') {
        s += '<rect x="' + (x - 2) + '" y="' + (t - 1) + '" width="6" height="2" fill="#808080" shape-rendering="crispEdges"/>';
      } else {
        s += '<rect x="' + (x - 1.5) + '" y="' + (t + .5) + '" width="4" height="' + Math.max(b - t, 1) + '" fill="' + (c === 'g' ? '#00ee00' : '#ff0000') + '" stroke="#707070" shape-rendering="crispEdges"/>';
      }
    });
    return s;
  }

  document.getElementById('svg-price').innerHTML =
    grid([[103, '#777'], [130], [182], [233], [285], [336], [387], [439], [490], [542], [593]], 84, 642) +
    '<ellipse cx="1436" cy="208" rx="50" ry="38" fill="#0e1f2e" stroke="#e0e000" stroke-width="1.2" stroke-dasharray="1.5 3"/>' +
    candles() +
    line(upper, BLUE) + line(lower, BLUE) + line(ma2, ORANGE) + line(ma1, RED);

  document.getElementById('svg-mom').innerHTML =
    grid([[665, '#444'], [703, '#6a6a6a'], [742, '#444']], 644, 765) + line(mom, BLUE);

  var mb = pts(macdB), mo = pts(macdO), hist = '';
  for (var i = 0; i < 243; i++) {
    var x = Math.round(6 + i * 6.3);
    var h = (at(mo, x) - at(mb, x)) * 1.1;
    if (Math.abs(h) < 1) { h = h < 0 ? -1 : 1; }
    hist += '<path d="M' + (x + .5) + ' 845V' + (845 - h) + '" stroke="' + PINK + '" shape-rendering="crispEdges"/>';
  }
  document.getElementById('svg-macd').innerHTML =
    grid([[799], [845, '#6a6a6a']], 767, 892) + hist + line(macdB, BLUE) + line(macdO, ORANGE);

  document.getElementById('svg-sto').innerHTML =
    grid([[903, '#444'], [920, '#5a5a5a'], [945, '#4a4a4a'], [970, '#5a5a5a'], [987, '#4a4a4a']], 894, 993) +
    line(stoB, BLUE) + line(stoO, ORANGE);

  function fill(id, top, ticks, flags) {
    var axis = document.getElementById(id), out = '';
    ticks.forEach(function (t) {
      out += '<div class="tick" style="top:' + (t[1] - top + 1) + 'px">' + t[0] + '</div>';
    });
    flags.forEach(function (f) {
      out += '<div class="flag f-' + f[2] + '" style="top:' + (f[1] - top) + 'px">' + f[0] + '</div>';
    });
    axis.innerHTML = out;
  }
  fill('axis-price', 84,
    [['22.00000', 131], ['21.00000', 182], ['20.00000', 233], ['19.00000', 285], ['18.00000', 336], ['17.00000', 387], ['16.00000', 439], ['15.00000', 490], ['14.00000', 542], ['13.00000', 593]],
    [['22.52681', 103, 'gray'], ['20.27076', 219, 'blue'], ['18.73137', 298, 'orange'], ['18.41360', 315, 'red'], ['18.23210', 324, 'green'], ['17.19198', 378, 'blue']]);
  fill('axis-mom', 644,
    [['2.00', 666], ['0.00', 703], ['-2.00', 742]],
    [['-0.57', 715, 'blue']]);
  fill('axis-macd', 767,
    [['0.50', 800], ['0.00', 845]],
    [['-0.06', 851, 'pink'], ['-0.42', 885, 'blue'], ['-0.36', 878, 'orange']]);
  fill('axis-sto', 894,
    [['100.00', 904], ['50.00', 945], ['0.00', 987]],
    [['28.46', 962, 'blue'], ['18.82', 971, 'orange']]);

  var labels = ['abr.', 'jul.', 'oct.', '2014', 'abr.', 'jul.', 'oct.', '2015', 'abr.', 'jul.', 'oct.', '2016', 'abr.', 'jul.', 'oct.', '2017', 'abr.', 'jul.'];
  document.getElementById('ticks').innerHTML = labels.map(function (t, i) {
    return '<div class="tlabel" style="left:' + (VERT[i + 1] - 4) + 'px">' + t + '</div>';
  }).join('');
})();
```
